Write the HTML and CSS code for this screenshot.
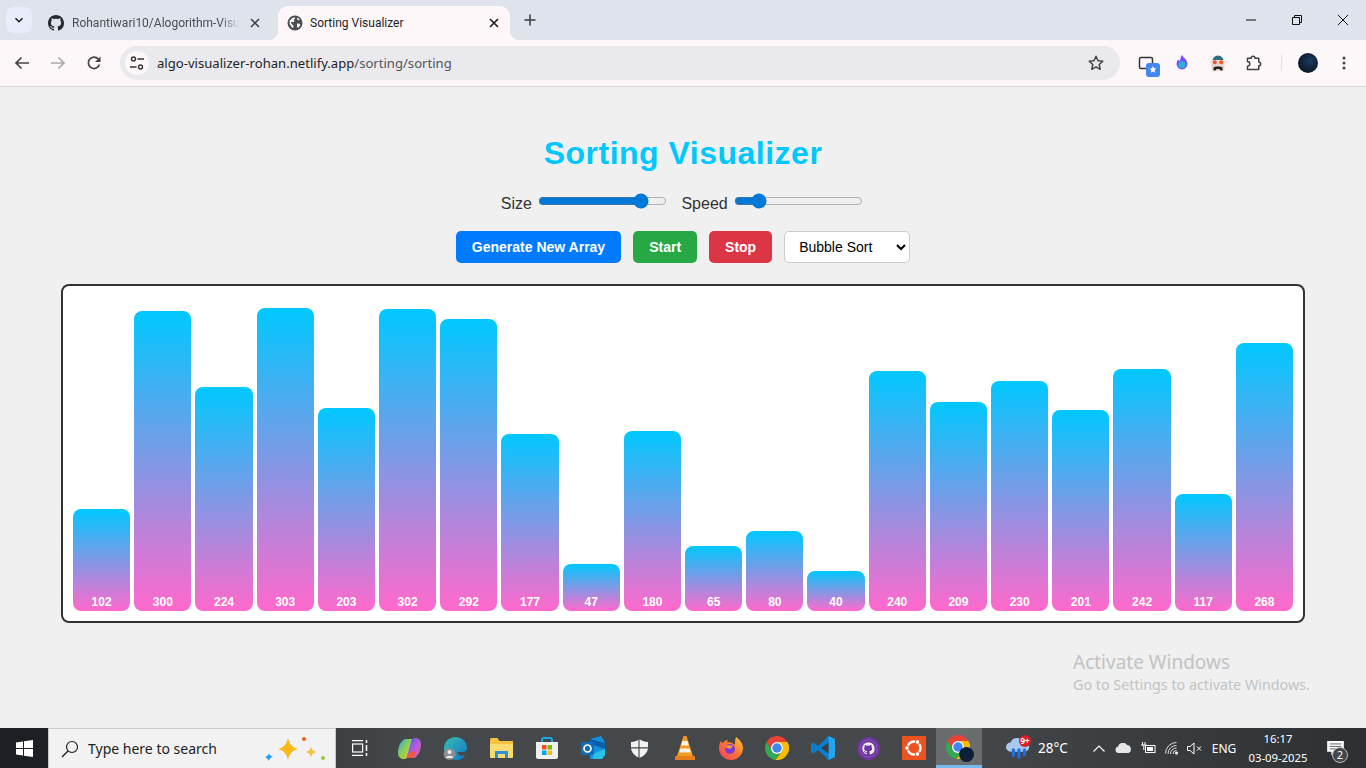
FILE: index.html
```html
<!DOCTYPE html>
<html lang="en">
<head>
<meta charset="utf-8">
<title>Sorting Visualizer</title>
<link rel="stylesheet" href="styles.css">
</head>
<body>
<div class="tabstrip">
  <button class="tabsearch"><svg width="12" height="12" viewBox="0 0 12 12"><path d="M2.5 4.2 6 7.7l3.5-3.5" fill="none" stroke="#1f1f1f" stroke-width="1.6"/></svg></button>
  <div class="tab">
    <svg class="favicon" width="16" height="16" viewBox="0 0 16 16"><path fill="#24292e" d="M8 0C3.58 0 0 3.58 0 8c0 3.54 2.29 6.53 5.47 7.59.4.07.55-.17.55-.38 0-.19-.01-.82-.01-1.49-2.01.37-2.53-.49-2.69-.94-.09-.23-.48-.94-.82-1.13-.28-.15-.68-.52-.01-.53.63-.01 1.08.58 1.23.82.72 1.21 1.87.87 2.33.66.07-.52.28-.87.51-1.07-1.78-.2-3.64-.89-3.64-3.95 0-.87.31-1.59.82-2.15-.08-.2-.36-1.02.08-2.12 0 0 .67-.21 2.2.82.64-.18 1.32-.27 2-.27.68 0 1.36.09 2 .27 1.53-1.04 2.2-.82 2.2-.82.44 1.1.16 1.92.08 2.12.51.56.82 1.27.82 2.15 0 3.07-1.87 3.75-3.65 3.95.29.25.54.73.54 1.48 0 1.07-.01 1.93-.01 2.2 0 .21.15.46.55.38A8.013 8.013 0 0016 8c0-4.42-3.58-8-8-8z"/></svg>
    <span class="tabtitle tabtitle-faded">Rohantiwari10/Alogorithm-Visu</span>
    <svg width="10" height="10" viewBox="0 0 10 10"><path d="M1 1l8 8M9 1l-8 8" stroke="#3c3c3c" stroke-width="1.5"/></svg>
  </div>
  <div class="tab tab-active">
    <svg class="favicon" width="16" height="16" viewBox="0 0 16 16"><circle cx="8" cy="8" r="7.5" fill="#4a4d52"/><path fill="#fdf7f9" d="M2.5 6 5 3.200l2.500-1 .6 1.300-1.400 1.200L7.500 6l-1 1.200-2-.5-.7.8L5.500 10l1 .6-.4 2.700-1.300-1-2-3zM10 8.500l2.800.2.600 1.500-2.400 2.800-1-1.500zM10.500 2.500l2.300 1.800-1.300 1-1.500-1z"/></svg>
    <span class="tabtitle">Sorting Visualizer</span>
    <svg width="10" height="10" viewBox="0 0 10 10"><path d="M1 1l8 8M9 1l-8 8" stroke="#1f1f1f" stroke-width="1.7"/></svg>
  </div>
  <button class="newtab"><svg width="12" height="12" viewBox="0 0 12 12"><path d="M6 .5v11M.5 6h11" stroke="#3c3c3c" stroke-width="1.5"/></svg></button>
  <div class="winctl">
    <svg width="12" height="12" viewBox="0 0 12 12"><path d="M1 6h10" stroke="#111" stroke-width="1"/></svg>
    <svg width="12" height="12" viewBox="0 0 12 12"><path d="M1.500 3.500h7v7h-7zM3.500 3.500v-2h7v7h-2" fill="none" stroke="#111"/></svg>
    <svg width="12" height="12" viewBox="0 0 12 12"><path d="M1 1l10 10M11 1 1 11" stroke="#111" stroke-width="1"/></svg>
  </div>
</div>

<div class="toolbar">
  <svg class="navicon" width="16" height="16" viewBox="0 0 16 16"><path d="M15 8H2M7.500 2.500 2 8l5.500 5.500" fill="none" stroke="#444" stroke-width="1.700"/></svg>
  <svg class="navicon" width="16" height="16" viewBox="0 0 16 16"><path d="M1 8h13M8.500 2.500 14 8l-5.500 5.500" fill="none" stroke="#a9a9ad" stroke-width="1.700"/></svg>
  <svg class="navicon" width="16" height="16" viewBox="0 0 16 16"><path d="M13.500 9.500A5.700 5.700 0 1 1 12.300 4L14 6" fill="none" stroke="#444" stroke-width="1.700"/><path d="M14.500 1.500V7H9z" fill="#444"/></svg>
  <div class="omnibox">
    <span class="sitechip"><svg width="16" height="16" viewBox="0 0 16 16"><g fill="none" stroke="#333" stroke-width="1.400"><circle cx="4.500" cy="4" r="2"/><path d="M8.500 4H15M1 12h6.500"/><circle cx="11.500" cy="12" r="2"/></g></svg></span>
    <span class="url">algo-visualizer-rohan.netlify.app<span class="urlpath">/sorting/sorting</span></span>
    <svg class="star" width="16" height="16" viewBox="0 0 16 16"><path d="M8 1.300l2 4.500 4.800.5-3.600 3.200 1 4.800L8 11.900l-4.200 2.400 1-4.800L1.200 6.300 6 5.800z" fill="none" stroke="#444" stroke-width="1.500" stroke-linejoin="round"/></svg>
  </div>
  <div class="exts">
    <span class="ext ext-cast">
      <svg width="22" height="22" viewBox="0 0 22 22"><rect x="1.500" y="5.500" width="13" height="11" rx="1.500" fill="none" stroke="#333" stroke-width="1.500"/><rect x="8" y="11" width="14" height="14" rx="3" fill="#4285f4"/><path d="M15 14l1 2.300 2.500.2-1.900 1.700.6 2.500-2.200-1.300-2.200 1.300.6-2.500-1.900-1.700 2.500-.2z" fill="#fff"/></svg>
    </span>
    <span class="ext">
      <svg width="14" height="17" viewBox="0 0 18 22"><path d="M9 1c1 4 7 6 7 12a7 7 0 0 1-14 0c0-3 1-4 2-6 1 1 1 2 2 2 1-2 1-5 3-8z" fill="#7c4dff"/><circle cx="9" cy="14" r="4.500" fill="#25b6c9"/></svg>
    </span>
    <span class="ext">
      <svg width="16" height="16" viewBox="0 0 16 16"><path d="M2.500 6a5.500 5.500 0 0 1 11 0z" fill="#31707f"/><rect x="1.500" y="5" width="13" height="11" rx="2.500" fill="#e9d6cf"/><rect x="0" y="5.500" width="16" height="2.500" rx="1.200" fill="#e8e2de"/><circle cx="4.800" cy="7.300" r="2" fill="#f0532d"/><circle cx="11.200" cy="7.300" r="2" fill="#f0532d"/><path d="M3.500 15.500v-3l2.500-1h4l2.500 1v3h-2l-1-1.500h-3l-1 1.500z" fill="#222"/></svg>
    </span>
    <span class="ext">
      <svg width="17" height="17" viewBox="0 0 18 18"><path d="M1.500 4.500h4a2 2 0 0 1 4 0h4v4a2 2 0 0 1 0 4v4h-12v-3.500a2 2 0 0 0 0-5z" fill="none" stroke="#444" stroke-width="1.600" stroke-linejoin="round"/></svg>
    </span>
    <span class="extsep"></span>
    <span class="avatar"></span>
    <svg class="menu" width="4" height="14" viewBox="0 0 4 14"><circle cx="2" cy="2" r="1.500" fill="#444"/><circle cx="2" cy="7" r="1.500" fill="#444"/><circle cx="2" cy="12" r="1.500" fill="#444"/></svg>
  </div>
</div>

<main class="page">
  <h1 class="title">Sorting Visualizer</h1>
  <div class="sliders">
    <label class="slider">Size <input class="range" type="range" min="0" max="100" value="84"></label>
    <label class="slider">Speed <input class="range" type="range" min="0" max="100" value="15"></label>
  </div>
  <div class="actions">
    <button class="btn btn-blue">Generate New Array</button>
    <button class="btn btn-green">Start</button>
    <button class="btn btn-red">Stop</button>
    <select class="algo"><option>Bubble Sort</option></select>
  </div>
  <div class="chart">
    <div class="bar" style="height:102px">102</div>
    <div class="bar" style="height:300px">300</div>
    <div class="bar" style="height:224px">224</div>
    <div class="bar" style="height:303px">303</div>
    <div class="bar" style="height:203px">203</div>
    <div class="bar" style="height:302px">302</div>
    <div class="bar" style="height:292px">292</div>
    <div class="bar" style="height:177px">177</div>
    <div class="bar" style="height:47px">47</div>
    <div class="bar" style="height:180px">180</div>
    <div class="bar" style="height:65px">65</div>
    <div class="bar" style="height:80px">80</div>
    <div class="bar" style="height:40px">40</div>
    <div class="bar" style="height:240px">240</div>
    <div class="bar" style="height:209px">209</div>
    <div class="bar" style="height:230px">230</div>
    <div class="bar" style="height:201px">201</div>
    <div class="bar" style="height:242px">242</div>
    <div class="bar" style="height:117px">117</div>
    <div class="bar" style="height:268px">268</div>
  </div>
  <div class="watermark">
    <div class="wm-big">Activate Windows</div>
    <div class="wm-small">Go to Settings to activate Windows.</div>
  </div>
</main>

<footer class="taskbar">
  <div class="start"><svg width="17" height="17" viewBox="0 0 17 17"><path fill="#fff" d="M0 2.400 7 1.400v6.500H0zM8 1.300 17 0v7.900H8zM0 9h7v6.600l-7-1zM8 9h9v8l-9-1.300z"/></svg></div>
  <div class="search">
    <svg class="search-glass" width="18" height="18" viewBox="0 0 18 18"><circle cx="11" cy="7" r="5.500" fill="none" stroke="#222" stroke-width="1.200"/><path d="M7 11l-6 6" stroke="#222" stroke-width="1.400"/></svg>
    <span class="search-text">Type here to search</span>
    <svg class="search-spark" width="62" height="28" viewBox="0 0 62 28"><path d="M23 2.500c1 6 4 10 10 11.500-6 1.500-9 5-10 11.500-1-6.500-4-10-10-11.500 6-1.500 9-5.500 10-11.500z" fill="#f9b815"/><path d="M46 11.500c.5 3 2 5 5.500 5.500-3.500.5-5 2.500-5.500 5.500-.5-3-2-5-5.500-5.500 3.500-.5 5-2.500 5.500-5.500z" fill="#f9c43a"/><path d="M4 18c.3 2 1.300 3 4 3.500-2.700 1-3.200 2-4.500 4.500-.3-2-1.300-3-3.500-4 2.700-1 3.700-2 4-4z" fill="#1ea1f1"/><circle cx="39" cy="4" r="2" fill="#ef5b2b"/><circle cx="58" cy="23" r="2" fill="#8ccb3f"/></svg>
  </div>
  <div class="apps">
    <div class="app app-first"><svg width="16" height="16" viewBox="0 0 16 16"><g fill="none" stroke="#fff" stroke-width="1.200"><path d="M0 .6h11M0 15.400h11"/><rect x=".6" y="4" width="10" height="8"/></g><path d="M14.500 0v3M14.500 5v6M14.500 13v3" stroke="#fff" stroke-width="1.500"/></svg></div>
    <div class="app"><svg width="23" height="23" viewBox="0 0 24 24"><defs><linearGradient id="cpa" x1="0" y1="0" x2="1" y2="1"><stop offset="0" stop-color="#2aa7e8"/><stop offset=".5" stop-color="#8fd14f"/><stop offset="1" stop-color="#f6b73c"/></linearGradient><linearGradient id="cpb" x1="0" y1="0" x2="1" y2="1"><stop offset="0" stop-color="#2c5fe0"/><stop offset=".5" stop-color="#b05be0"/><stop offset="1" stop-color="#f06292"/></linearGradient></defs><path d="M7 2h8L10 20c-.5 2-2 3-4 3-3 0-6-2-6-6C0 11 2 5 7 2z" fill="url(#cpa)"/><path d="M17 22H9l5-18c.5-2 2-3 4-3 3 0 6 2 6 6 0 6-2 12-7 15z" fill="url(#cpb)"/><path d="M9 22h7l2-7-6 1z" fill="#ef5a38"/></svg></div>
    <div class="app"><svg width="25" height="25" viewBox="0 0 25 25"><defs><linearGradient id="edg" x1="0" y1="0" x2="1" y2="1"><stop offset="0" stop-color="#35c1b4"/><stop offset="1" stop-color="#1273c9"/></linearGradient></defs><path d="M12.500 1C19 1 24 6 24 12c0 2-1 4-4 4h-6c1 3 4 5 8 3-2 4-5 5-9 5C7 24 1 19 1 12.500 1 6 6 1 12.500 1z" fill="url(#edg)"/><circle cx="6.500" cy="18" r="6" fill="#8b8e90"/><circle cx="6.500" cy="16" r="2" fill="#eee"/><path d="M2.800 22c.5-3 7-3 7.500 0z" fill="#eee"/></svg></div>
    <div class="app"><svg width="23" height="20" viewBox="0 0 23 20"><path d="M0 1.500A1.500 1.500 0 0 1 1.500 0h6l2 3H23v15.500a1.500 1.500 0 0 1-1.500 1.500h-20A1.500 1.500 0 0 1 0 18.500z" fill="#f5c242"/><path d="M0 6h23v12.500a1.500 1.500 0 0 1-1.500 1.500h-20A1.500 1.500 0 0 1 0 18.500z" fill="#fadb72"/><path d="M5 13h13v7H5z" fill="#2f8fd8"/><path d="M8 16h7v4H8z" fill="#fadb72"/></svg></div>
    <div class="app"><svg width="24" height="24" viewBox="0 0 24 24"><path d="M7 7V4a2 2 0 0 1 2-2h6a2 2 0 0 1 2 2v3" fill="none" stroke="#1aa7e8" stroke-width="2"/><path d="M1 6h22v15a2 2 0 0 1-2 2H3a2 2 0 0 1-2-2z" fill="#f0f0f0"/><rect x="7" y="9" width="4.500" height="4.500" fill="#f25022"/><rect x="12.500" y="9" width="4.500" height="4.500" fill="#7fba00"/><rect x="7" y="14.500" width="4.500" height="4.500" fill="#00a4ef"/><rect x="12.500" y="14.500" width="4.500" height="4.500" fill="#ffb900"/></svg></div>
    <div class="app"><svg width="24" height="24" viewBox="0 0 24 24"><path d="M9 3l11-3 4 6v13l-3 4H9z" fill="#1490df"/><path d="M9 3l15 4v6L9 8z" fill="#0a5fa8"/><path d="M12 23h9l3-4v-6l-12 5z" fill="#28c2e8"/><rect y="6" width="13" height="13" rx="1.500" fill="#0f6cbd"/><circle cx="6.500" cy="12.500" r="3.500" fill="none" stroke="#fff" stroke-width="1.700"/></svg></div>
    <div class="app"><svg width="17" height="19" viewBox="0 0 18 20"><path d="M9 0c2 2 5 3 9 3v6c0 5-4 9-9 11-5-2-9-6-9-11V3c4 0 7-1 9-3z" fill="#f2f2f2"/><path d="M8.500 0v20M0 9.300h18" stroke="#454849" stroke-width="1.200"/></svg></div>
    <div class="app"><svg width="20" height="24" viewBox="0 0 20 24"><path d="M8.500 0h3L18 20H2z" fill="#f39a1f"/><path d="M7.400 5h5.200l1.200 4.500H6.200zM5.400 12.500h9.200l1.200 4H4.300z" fill="#f5f1e9"/><path d="M0 20h20v4H0z" fill="#e4801a"/></svg></div>
    <div class="app"><svg width="24" height="24" viewBox="0 0 24 24"><defs><linearGradient id="ffx" x1="0" y1="1" x2="1" y2="0"><stop offset="0" stop-color="#f33a6a"/><stop offset=".55" stop-color="#ff7a2d"/><stop offset="1" stop-color="#ffc83a"/></linearGradient></defs><path d="M17 1c3 2 7 6 7 11a12 12 0 0 1-24 0c0-3 1-6 2-7 .5 1 1 2 2 2 1-2 3-3 5-3-1 1-1 2-1 2 3 0 6 1 8 3 0-3 0-6 1-8z" fill="url(#ffx)"/><circle cx="11" cy="13" r="5" fill="#7e3ad6"/><path d="M6 11c2-2 6-2 8-1l-3 3z" fill="#ff9a2d"/></svg></div>
    <div class="app"><svg width="24" height="24" viewBox="0 0 24 24"><path fill="#ea4335" d="M12 0A12 12 0 0 0 1.600 6L7 14.700A5.500 5.500 0 0 1 12 6.500h10.400A12 12 0 0 0 12 0z"/><path fill="#34a853" d="M1.600 6A12 12 0 0 0 10.400 23.900L15 16.500A5.500 5.500 0 0 1 7.200 14.700z"/><path fill="#fbbc04" d="M22.400 6H12a6 6 0 0 1 5 9l-6.600 8.900A12 12 0 0 0 22.400 6z"/><circle cx="12" cy="12" r="6" fill="#fff"/><circle cx="12" cy="12" r="4.700" fill="#4285f4"/></svg></div>
    <div class="app"><svg width="24" height="24" viewBox="0 0 24 24"><path d="M17.500 0 24 3v18l-6.500 3L7 14l-4.500 3.500L0 16v-8l2.500-1.500L7 10z" fill="#0a7fd0"/><path d="M17.500 0 24 3v18l-6.500 3z" fill="#25a4ee"/><path d="M17.500 6.500v11L10 12z" fill="#3c3f41"/></svg></div>
    <div class="app app-tight"><svg width="23" height="23" viewBox="0 0 24 24"><circle cx="12" cy="12" r="12" fill="#6e359f"/><circle cx="12" cy="12" r="9" fill="none" stroke="#8f5bbd" stroke-width="1"/><g transform="translate(5.500 5.500) scale(.81)"><path fill="#ececec" d="M8 0C3.580 0 0 3.580 0 8c0 3.540 2.290 6.530 5.470 7.590.4.070.55-.17.55-.38v-1.340C3.800 14.360 3.320 13 3.320 13c-.36-.92-.89-1.170-.89-1.170-.73-.5.050-.49.050-.49.800.06 1.220.82 1.220.82.720 1.220 1.870.87 2.330.66.070-.52.280-.87.510-1.070C4.260 11.550 2.400 10.860 2.400 7.800c0-.87.310-1.590.82-2.150-.08-.2-.36-1.020.08-2.120 0 0 .67-.21 2.200.82a7.600 7.600 0 0 1 4 0c1.530-1.040 2.200-.82 2.200-.82.440 1.100.160 1.920.08 2.120.510.560.820 1.270.820 2.150 0 3.070-1.870 3.750-3.650 3.950.290.250.540.730.540 1.480v2.200c0 .21.150.46.550.38A8 8 0 0 0 16 8c0-4.420-3.580-8-8-8z"/></g></svg></div>
    <div class="app app-tight"><svg width="24" height="24" viewBox="0 0 24 24"><rect width="24" height="24" fill="#e95420"/><circle cx="12" cy="12" r="6.500" fill="none" stroke="#fff" stroke-width="2.400"/><circle cx="5" cy="12" r="2.300" fill="#fff" stroke="#e95420"/><circle cx="15.500" cy="6" r="2.300" fill="#fff" stroke="#e95420"/><circle cx="15.500" cy="18" r="2.300" fill="#fff" stroke="#e95420"/></svg></div>
    <div class="app app-active"><svg width="24" height="24" viewBox="0 0 24 24"><path fill="#ea4335" d="M12 0A12 12 0 0 0 1.600 6L7 14.700A5.500 5.500 0 0 1 12 6.500h10.400A12 12 0 0 0 12 0z"/><path fill="#34a853" d="M1.600 6A12 12 0 0 0 10.400 23.900L15 16.500A5.500 5.500 0 0 1 7.200 14.700z"/><path fill="#fbbc04" d="M22.400 6H12a6 6 0 0 1 5 9l-6.600 8.900A12 12 0 0 0 22.400 6z"/><circle cx="12" cy="12" r="6" fill="#fff"/><circle cx="12" cy="12" r="4.700" fill="#4285f4"/></svg><span class="app-badge"></span></div>
  </div>
  <div class="tray">
    <div class="tray-cell tray-weather"><svg width="26" height="24" viewBox="0 0 28 26"><path d="M6 17a5 5 0 0 1 0-10 7 7 0 0 1 13-1 5.500 5.500 0 0 1 3 11z" fill="#a9c8ef"/><path d="M9 15v6M15 15v8M21 15v5" stroke="#1f6fe0" stroke-width="3.500" stroke-linecap="round"/></svg><span class="weather-badge">9+</span></div>
    <div class="tray-cell tray-temp">28°C</div>
    <div class="tray-cell"><svg width="12" height="7" viewBox="0 0 12 7"><path d="M.5 6.500 6 1l5.500 5.500" fill="none" stroke="#fff" stroke-width="1.100"/></svg></div>
    <div class="tray-cell"><svg width="17" height="10" viewBox="0 0 17 10"><path d="M3.500 10a3.300 3.300 0 0 1-.5-6.500 5 5 0 0 1 9-1.500 4.200 4.200 0 0 1 1.500 8z" fill="#e6e6e6"/></svg></div>
    <div class="tray-cell"><svg width="16" height="12" viewBox="0 0 16 12"><path d="M2.500 0v3M5 0v3M1 3h5.500M3.800 3v5" stroke="#fff" fill="none"/><rect x="5.500" y="3.500" width="9.500" height="7" fill="none" stroke="#fff"/><rect x="7" y="5" width="6" height="4" fill="#fff"/></svg></div>
    <div class="tray-cell"><svg width="14" height="13" viewBox="0 0 14 13"><g fill="none" stroke="#ddd"><path d="M.5 11.500a11 11 0 0 1 11-11"/><path d="M3 12a8.500 8.500 0 0 1 8.500-8.500"/><path d="M5.500 12a6 6 0 0 1 6-6"/><path d="M8 12a3.500 3.500 0 0 1 3.500-3.500"/></g><circle cx="11.500" cy="11" r="1.500" fill="#fff"/></svg></div>
    <div class="tray-cell"><svg width="15" height="13" viewBox="0 0 15 13"><path d="M.5 4.500h2.500L7 1v11L3 8.500H.5z" fill="none" stroke="#fff"/><path d="M10 4.500l4 4M14 4.500l-4 4" stroke="#fff"/></svg></div>
    <div class="tray-cell tray-lang">ENG</div>
    <div class="tray-cell tray-clock"><span>16:17</span><span>03-09-2025</span></div>
    <div class="tray-cell tray-notif"><svg width="17" height="15" viewBox="0 0 20 18"><path d="M0 0h20v13H8.500L5 17v-4H0z" fill="#fff"/><path d="M3 3.500h14M3 6.500h14M3 9.500h10" stroke="#454849"/></svg><span class="notif-badge">2</span></div>
  </div>
</footer>
</body>
</html>
```
FILE: styles.css
```css
* { box-sizing: border-box; }
html, body { margin: 0; padding: 0; }
body {
  width: 1366px;
  height: 768px;
  overflow: hidden;
  display: flex;
  flex-direction: column;
  background: #f0f0f0;
  font-family: "Liberation Sans", Arial, sans-serif;
}
button { border: 0; padding: 0; background: none; font: inherit; }

/* Browser tab strip */
.tabstrip {
  flex: none;
  height: 40px;
  display: flex;
  align-items: flex-start;
  background: #dfe3ec;
  font-family: Roboto, sans-serif;
  font-size: 12px;
}
.tabsearch {
  width: 26px; height: 26px;
  margin: 7px 16px 0 6px;
  border-radius: 8px;
  background: #e9edfb;
  display: flex; align-items: center; justify-content: center;
}
.tab {
  position: relative;
  flex: none;
  width: 230px; height: 34px;
  margin-top: 6px;
  padding-right: 18px;
  display: flex; align-items: center;
}
.tab svg { flex: none; }
.tab-active {
  width: 232px;
  padding: 0 11px 0 9px;
  background: #fdf7f9;
  border-radius: 10px 10px 0 0;
}
.tab-active::before,
.tab-active::after {
  content: "";
  position: absolute;
  bottom: 0;
  width: 10px; height: 10px;
}
.tab-active::before { left: -10px; background: radial-gradient(circle at 0 0, transparent 10px, #fdf7f9 10.5px); }
.tab-active::after { right: -10px; background: radial-gradient(circle at 100% 0, transparent 10px, #fdf7f9 10.5px); }
.favicon { margin-right: 8px; }
.tab-active .favicon { margin-right: 7px; }
.tabtitle { flex: 1; white-space: nowrap; color: #1f1f1f; }
.tabtitle-faded {
  flex: none;
  width: 168px;
  margin-right: 10px;
  color: #4a4d52;
  -webkit-mask-image: linear-gradient(90deg, #000 88%, transparent);
  mask-image: linear-gradient(90deg, #000 88%, transparent);
}
.newtab {
  width: 28px; height: 28px;
  margin: 6px 0 0 6px;
  display: flex; align-items: center; justify-content: center;
}
.winctl {
  margin-left: auto;
  height: 40px;
  width: 121px;
  display: flex; align-items: center; justify-content: space-between;
  padding-right: 17px;
}

/* Browser toolbar */
.toolbar {
  flex: none;
  height: 47px;
  background: #fdf7f9;
  border-bottom: 1px solid #dcdcdc;
  display: flex;
  align-items: center;
  padding: 0 0 1px 14px;
}
.navicon { flex: none; margin-right: 20px; }
.navicon:nth-of-type(3) { margin-right: 18px; }
.omnibox {
  width: 1000px; height: 34px;
  border-radius: 17px;
  background: #e9e9ee;
  display: flex; align-items: center;
  padding: 0 16px 0 5px;
}
.sitechip {
  width: 24px; height: 24px;
  border-radius: 50%;
  background: #fdf7f9;
  display: flex; align-items: center; justify-content: center;
  margin-right: 8px;
}
.url { flex: 1; font-family: "Noto Sans", sans-serif; font-size: 13.1px; color: #1f1f1f; white-space: nowrap; }
.urlpath { color: #54565a; }
.star { flex: none; }
.exts { flex: 1; display: flex; align-items: center; padding-left: 18px; }
.ext { width: 36px; display: flex; justify-content: center; align-items: center; }
.ext-cast { width: 26px; justify-content: flex-start; }
.ext-cast svg { overflow: visible; }
.extsep { width: 1px; height: 16px; background: #d3e3fd; margin: 0 16px 0 9px; }
.avatar {
  width: 20px; height: 20px;
  border-radius: 50%;
  background: radial-gradient(circle at 60% 40%, #1e3a5f, #0a1626 75%);
}
.menu { margin-left: 24px; }

/* Page */
.page {
  position: relative;
  flex: 1;
  min-height: 0;
  padding-top: 46px;
  text-align: center;
  color: #333;
}
.title {
  margin: 0 0 18px;
  font-size: 32px;
  line-height: 40px;
  font-weight: 700;
  color: #00c8ff;
  letter-spacing: .5px;
}
.sliders {
  display: flex;
  justify-content: center;
  gap: 12px;
  height: 22px;
  margin-bottom: 18px;
  font-size: 16px;
}
.slider { display: block; line-height: 22px; }
.range { accent-color: #0078d7; width: 129px; height: 16px; margin: 2px; vertical-align: baseline; }
.actions {
  display: flex;
  justify-content: center;
  gap: 12px;
  height: 32px;
  margin-bottom: 21px;
}
.btn {
  height: 32px;
  padding: 0 16px;
  border-radius: 5px;
  color: #fff;
  font-size: 14px;
  font-weight: 700;
}
.btn-blue { background: #007bff; }
.btn-green { background: #28a745; }
.btn-red { background: #dc3545; }
.algo {
  width: 126px; height: 32px;
  padding: 0 0 0 10px;
  border: 1px solid #ccc;
  border-radius: 5px;
  background: #fff;
  color: #000;
  font-family: inherit;
  font-size: 14px;
}
.chart {
  margin: 0 61px;
  height: 339px;
  padding: 10px;
  border: 2px solid #333;
  border-radius: 8px;
  background: #fff;
  display: flex;
  align-items: flex-end;
  gap: 4px;
}
.bar {
  flex: 1;
  border-radius: 8px;
  background: linear-gradient(180deg, #00c8ff 0%, #ff69cc 100%);
  color: #fff;
  font-size: 12px;
  font-weight: 700;
  line-height: 14px;
  display: flex;
  align-items: flex-end;
  justify-content: center;
  padding-bottom: 2px;
}
.watermark {
  position: absolute;
  left: 1073px; top: 562px;
  text-align: left;
  font-family: "Noto Sans", sans-serif;
  color: #c3c3c3;
  white-space: nowrap;
}
.wm-big { font-size: 19px; line-height: 26px; }
.wm-small { font-size: 14.3px; line-height: 20px; }

/* Taskbar */
.taskbar {
  flex: none;
  height: 40px;
  display: flex;
  background: linear-gradient(90deg, #1c2024 0 4%, #45484a 30%, #45484a 70%, #2c3032 100%);
  color: #fff;
  font-family: "Noto Sans", sans-serif;
}
.start { flex: none; width: 48px; display: flex; align-items: center; justify-content: center; }
.search {
  flex: none;
  width: 288px;
  background: #f2f2f2;
  border: 1px solid #c9c9c9;
  border-bottom: 0;
  display: flex; align-items: center;
  padding-left: 12px;
  color: #222;
}
.search-glass { flex: none; margin-right: 9px; }
.search-text { font-size: 14px; white-space: nowrap; }
.search-spark { flex: none; margin-left: auto; margin-right: 8px; overflow: visible; }
.apps { flex: none; display: flex; }
.app {
  position: relative;
  flex: none;
  width: 46px;
  display: flex; align-items: center; justify-content: center;
}
.app-first { width: 50px; padding-right: 2px; }
.app-tight { width: 45px; }
.app-active { background: #6a6d6e; border-bottom: 3px solid #76b9ed; padding-right: 3px; }
.app-badge {
  position: absolute;
  right: 8px; bottom: 3px;
  width: 15px; height: 15px;
  border-radius: 50%;
  background: #0c1e38;
}
.tray {
  flex: 1;
  display: grid;
  grid-template-columns: 18px 36px 50px 25px 24px 25px 24px 20px 40px 68px 46px 8px;
}
.tray-cell { display: flex; align-items: center; justify-content: center; position: relative; font-size: 12px; }
.tray-weather { grid-column: 2; }
.tray-temp { justify-content: flex-start; padding-left: 2px; font-size: 13.5px; }
.tray-lang { font-size: 12px; }
.tray-clock { flex-direction: column; line-height: 19px; font-size: 11.3px; }
.weather-badge {
  position: absolute;
  left: 19px; top: 7px;
  width: 12px; height: 12px;
  border-radius: 50%;
  background: #d32029;
  font-size: 8px;
  line-height: 12px;
  text-align: center;
  font-weight: 700;
}
.notif-badge {
  position: absolute;
  left: 20px; top: 19px;
  width: 16px; height: 16px;
  border-radius: 50%;
  background: #45484a;
  border: 1px solid #bbb;
  font-size: 11px;
  line-height: 14px;
  text-align: center;
}
```
